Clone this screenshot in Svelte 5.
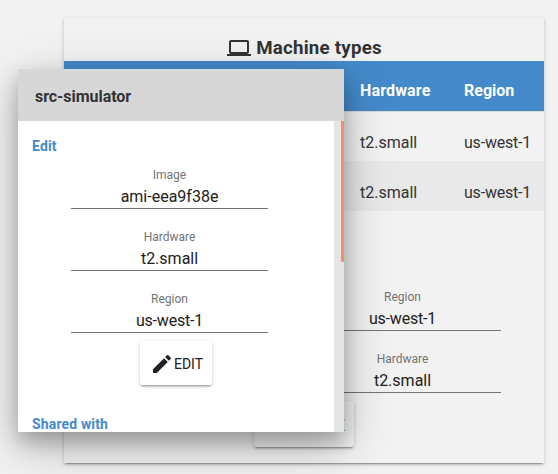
<script>
  const rows = [
    { hardware: 't2.small', region: 'us-west-1' },
    { hardware: 't2.small', region: 'us-west-1' },
  ];
  const pageFields = [
    { label: 'Region', value: 'us-west-1' },
    { label: 'Hardware', value: 't2.small' },
  ];
  const dialogFields = [
    { label: 'Image', value: 'ami-eea9f38e' },
    { label: 'Hardware', value: 't2.small' },
    { label: 'Region', value: 'us-west-1' },
  ];
</script>

{#snippet field(f)}
  <div class="field">
    <span class="label">{f.label}</span>
    <span class="value" class:tight={f.label === 'Region'}>{f.value}</span>
  </div>
{/snippet}

<main>
  <section class="card">
    <h1>
      <svg width="24" height="24" viewBox="0 0 24 24"><path fill="currentColor" d="M20 18c1.1 0 1.99-.9 1.99-2L22 6c0-1.100-.9-2-2-2H4c-1.100 0-2 .9-2 2v10c0 1.100.9 2 2 2H0v2h24v-2h-4zM4 6h16v10H4V6z" /></svg>
      <span>Machine types</span>
    </h1>
    <div class="row head"><span>Hardware</span><span>Region</span></div>
    {#each rows as r}
      <div class="row"><span>{r.hardware}</span><span class="tight">{r.region}</span></div>
    {/each}
    <div class="form">
      {#each pageFields as f}{@render field(f)}{/each}
    </div>
    <button class="create">
      <svg width="24" height="24" viewBox="0 0 24 24"><path fill="currentColor" d="M19 13h-6v6h-2v-6H5v-2h6V5h2v6h6v2z" /></svg>
      <span>CREATE</span>
    </button>
  </section>

  <div class="dialog">
    <header>src-simulator</header>
    <div class="scroller">
      <div class="content">
        <h2>Edit</h2>
        <div class="fields">
          {#each dialogFields as f}{@render field(f)}{/each}
        </div>
        <button class="edit">
          <svg width="24" height="24" viewBox="0 0 24 24"><path fill="currentColor" d="M3 17.250V21h3.750L17.810 9.940l-3.750-3.750L3 17.250zM20.710 7.040a1 1 0 0 0 0-1.410l-2.340-2.340a1 1 0 0 0-1.410 0l-1.830 1.830 3.750 3.750 1.830-1.830z" /></svg>
          <span>EDIT</span>
        </button>
        <h2 class="shared">Shared with</h2>
      </div>
      <div class="track"><div class="thumb"></div></div>
    </div>
  </div>
</main>

<style>
  :global(body) { background: #f2f2f2; }
  main {
    position: relative;
    box-sizing: border-box;
    width: 558px;
    height: 474px;
    padding: 18px 14px 11px 64px;
    overflow: hidden;
    font-family: Roboto, sans-serif;
    color: #333;
  }
  .card {
    display: flex;
    flex-direction: column;
    width: 480px;
    height: 445px;
    box-shadow: 0 2px 2px 0 rgba(0, 0, 0, .14), 0 1px 5px 0 rgba(0, 0, 0, .12), 0 3px 1px -2px rgba(0, 0, 0, .2);
    background: #f2f2f2;
  }
  h1 {
    display: flex;
    justify-content: center;
    gap: 5px;
    box-sizing: border-box;
    height: 43px;
    margin: 0;
    padding: 18px 0 0 1px;
    font-size: 18.720px;
    line-height: 24px;
    font-weight: 700;
    letter-spacing: .23px;
  }
  h1 svg { flex: none; }
  h1 span { white-space: nowrap; }
  .tight { letter-spacing: -.2px; }
  .row {
    display: grid;
    grid-template-columns: 104px 80px;
    flex: none;
    box-sizing: border-box;
    height: 50px;
    padding: 20px 0 0 296px;
    font-size: 16px;
    line-height: 24px;
  }
  .row.head {
    padding-top: 18px;
    background: #448aca;
    box-shadow: 0 1px 0 #dadada;
    color: #fff;
    font-weight: 700;
    letter-spacing: .15px;
  }
  .row.head span:last-child { letter-spacing: 0; }
  .row:nth-of-type(3) { background: #e9e9e9; }
  .field {
    display: flex;
    flex-direction: column;
    align-items: center;
    box-sizing: border-box;
    width: 197px;
    height: 41px;
    margin-bottom: 21px;
    border-bottom: 1px solid #737373;
  }
  .label { font-size: 12px; line-height: 14px; color: #737373; }
  .value { margin-top: 3px; font-size: 16px; line-height: 24px; color: #212121; }
  .form { height: 124px; padding: 79px 0 0 240px; flex: none; }
  button {
    display: flex;
    align-items: center;
    justify-content: center;
    box-sizing: border-box;
    border: 0;
    border-radius: 3px;
    background: #fff;
    box-shadow: 0 2px 2px 0 rgba(0, 0, 0, .14), 0 1px 5px 0 rgba(0, 0, 0, .12), 0 3px 1px -2px rgba(0, 0, 0, .2);
    font: 14px Roboto, sans-serif;
    color: #212121;
  }
  .create {
    flex: none;
    width: 100px;
    height: 46px;
    margin: -13px 0 0 190px;
    padding: 2px 9px 0 6px;
    justify-content: flex-end;
    background: #f2f2f2;
    color: #448aca;
    font-size: 16px;
  }
  .dialog {
    position: absolute;
    left: 18px;
    top: 69px;
    width: 326px;
    height: 363px;
    background: #fff;
    box-shadow: 0 14px 45px rgba(0, 0, 0, .25), 0 10px 18px rgba(0, 0, 0, .22);
  }
  header {
    box-sizing: border-box;
    height: 52px;
    padding: 16px 17px;
    background: #d7d7d7;
    font-size: 16px;
    line-height: 24px;
    font-weight: 700;
    letter-spacing: -.05px;
  }
  .scroller { display: flex; height: 311px; overflow: hidden; }
  .content { flex: 1; }
  h2 {
    height: 16px;
    margin: 17px 0 0 14px;
    font-size: 14px;
    line-height: 16px;
    font-weight: 700;
    letter-spacing: .15px;
    color: #448aca;
  }
  .fields { padding: 14px 0 0 53px; }
  .edit {
    width: 72px;
    height: 44px;
    margin: -13px 0 0 122px;
    padding: 1px 0 0 1px;
  }
  .edit span { padding-top: 1px; }
  .shared { margin-top: 31px; }
  .track { display: flex; justify-content: flex-end; width: 10px; background: #e5e5e5; }
  .thumb { width: 3px; height: 141px; border-radius: 0 0 1px 1px; background: #f28e68; }
</style>
